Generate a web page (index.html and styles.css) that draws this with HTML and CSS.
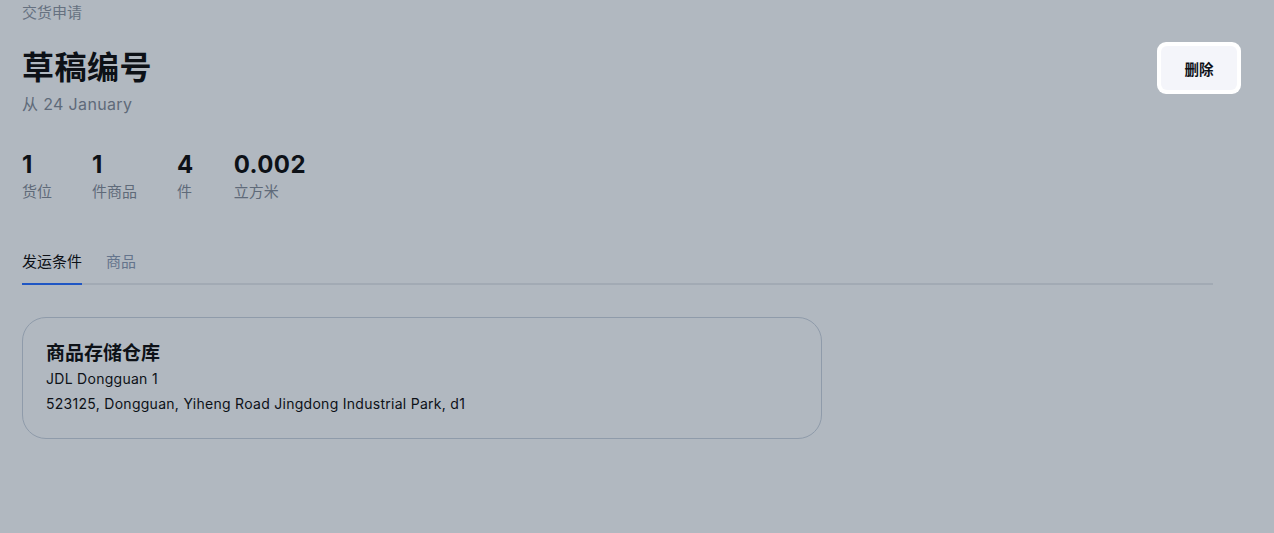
FILE: index.html
```html
<!DOCTYPE html>
<html lang="zh">
<head>
<meta charset="utf-8">
<link rel="stylesheet" href="styles.css">
</head>
<body>
<div class="page">
  <div class="crumb">交货申请</div>
  <div class="head">
    <div class="head-left">
      <h1 class="title">草稿编号</h1>
      <div class="sub">从 24 January</div>
    </div>
    <div class="btn-ring"><button class="btn">删除</button></div>
  </div>
  <div class="stats">
    <div class="stat"><div class="num">1</div><div class="lbl">货位</div></div>
    <div class="stat"><div class="num">1</div><div class="lbl">件商品</div></div>
    <div class="stat"><div class="num">4</div><div class="lbl">件</div></div>
    <div class="stat"><div class="num">0.002</div><div class="lbl">立方米</div></div>
  </div>
  <div class="tabs">
    <div class="tab active">发运条件</div>
    <div class="tab">商品</div>
  </div>
  <div class="card">
    <div class="card-title">商品存储仓库</div>
    <div class="card-line">JDL Dongguan 1</div>
    <div class="card-line">523125, Dongguan, Yiheng Road Jingdong Industrial Park, d1</div>
  </div>
</div>
</body>
</html>
```
FILE: styles.css
```css
html, body {
  margin: 0;
  padding: 0;
  background: #b1b8c0;
  font-family: Inter, "Noto Sans CJK SC", sans-serif;
  color: #0d1117;
}
.page {
  padding: 4px 33px 0 22px;
  height: 529px;
}
.crumb {
  font-size: 15px;
  line-height: 18px;
  color: #667180;
}
.head {
  display: flex;
  justify-content: space-between;
  align-items: flex-start;
  margin-top: 20px;
}
.title {
  margin: 6px 0 0;
  font-size: 32px;
  line-height: 40px;
  font-weight: 700;
  letter-spacing: 0.5px;
}
.sub {
  font-size: 16px;
  line-height: 22px;
  letter-spacing: 0.35px;
  color: #5f6a79;
  margin-top: 5px;
}
.btn-ring {
  background: #ffffff;
  border-radius: 9px;
  padding: 4px;
}
.btn {
  display: block;
  width: 76px;
  height: 44px;
  border: none;
  border-radius: 6px;
  background: #f4f5fa;
  font-family: Inter, "Noto Sans CJK SC", sans-serif;
  font-size: 14.5px;
  font-weight: 700;
  color: #0d1117;
  padding: 0;
}
.stats {
  display: flex;
  gap: 40px;
  margin-top: 35px;
}
.num {
  font-size: 24px;
  line-height: 30px;
  font-weight: 700;
  letter-spacing: 0.4px;
}
.lbl {
  font-size: 15px;
  line-height: 24px;
  color: #5f6a79;
}
.tabs {
  display: flex;
  gap: 24px;
  margin-top: 48px;
  border-bottom: 2px solid #a2aab4;
  width: 1191px;
}
.tab {
  font-size: 15px;
  line-height: 20px;
  padding-bottom: 11px;
  margin-bottom: -2px;
  color: #64748c;
  border-bottom: 2px solid transparent;
}
.tab.active {
  color: #0d1117;
  border-bottom-color: #1f56c4;
}
.card {
  margin-top: 32px;
  width: 800px;
  box-sizing: border-box;
  border: 1px solid #8f9baa;
  border-radius: 24px;
  padding: 24px 23px 22px;
}
.card-title {
  font-size: 19px;
  line-height: 24px;
  font-weight: 700;
  margin-bottom: 1px;
}
.card-line {
  font-size: 14px;
  line-height: 24px;
  letter-spacing: 0.28px;
}
.card-line + .card-line {
  margin-top: 1px;
}
```
